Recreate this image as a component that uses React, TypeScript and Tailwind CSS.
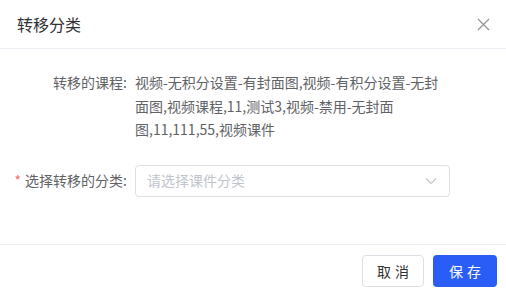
import { useState } from "react";

const font = { fontFamily: '"Noto Sans CJK SC", "Noto Sans", sans-serif' };

export default function App() {
  const [fenlei, setFenlei] = useState("");

  return (
    <div className="w-[506px] h-[294px] bg-white flex flex-col" style={font}>
      {/* Header */}
      <div className="h-[49px] border-b border-[#ebeef5] flex items-center justify-between pl-[17px] pr-[16px]">
        <span className="text-[16px] text-[#303133] font-normal">转移分类</span>
        <button className="w-[14px] h-[14px] flex items-center justify-center text-[#909399]">
          <svg width="13" height="13" viewBox="0 0 13 13" fill="none" stroke="currentColor" strokeWidth="1.2">
            <path d="M1 1 L12 12 M12 1 L1 12" />
          </svg>
        </button>
      </div>

      {/* Body */}
      <div className="flex-1 pt-[22px] text-[14px]">
        <div className="flex">
          <div className="w-[127px] shrink-0 text-right text-[#606266] leading-[23.5px]">转移的课程:</div>
          <div className="w-[315px] ml-[8px] text-[#606266] leading-[23.5px]">
            视频-无积分设置-有封面图,视频-有积分设置-无封面图,视频课程,11,测试3,视频-禁用-无封面图,11,111,55,视频课件
          </div>
        </div>

        <div className="flex items-center mt-[23px]">
          <div className="w-[127px] shrink-0 text-right text-[#606266]">
            <span className="text-[#f56c6c] mr-[4px]">*</span>选择转移的分类:
          </div>
          <div className="w-[315px] h-[32px] ml-[8px] border border-[#dcdfe6] rounded-[4px] flex items-center justify-between pl-[11px] pr-[12px]">
            <span className={fenlei ? "text-[#606266]" : "text-[#c0c4cc]"}>{fenlei || "请选择课件分类"}</span>
            <svg width="12" height="8" viewBox="0 0 12 8" fill="none" stroke="#c0c4cc" strokeWidth="1.1" onClick={() => setFenlei("")}>
              <path d="M1 1.5 L6 6.5 L11 1.5" />
            </svg>
          </div>
        </div>
      </div>

      {/* Footer */}
      <div className="h-[50px] border-t border-[#ebeef5] flex items-start justify-end gap-[9px] pt-[10px] pr-[9px]">
        <button className="w-[62px] h-[32px] border border-[#dcdfe6] rounded-[4px] text-[14px] text-[#303133] tracking-[4px] pl-[4px]">
          取消
        </button>
        <button className="w-[64px] h-[32px] bg-[#2a5cf6] rounded-[4px] text-[14px] text-white tracking-[4px] pl-[4px]">
          保存
        </button>
      </div>
    </div>
  );
}
